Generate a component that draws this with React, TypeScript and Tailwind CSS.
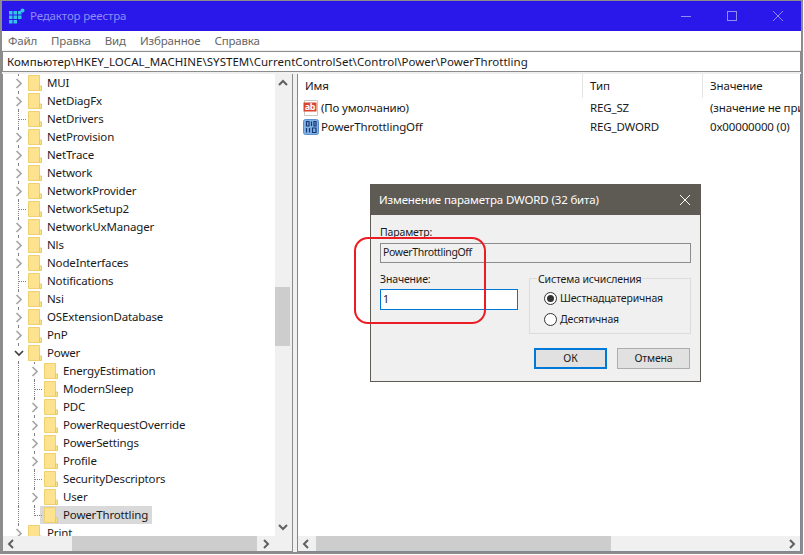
type Row = { name: string; depth: number; mark: "closed" | "open" | "leaf"; selected?: boolean; last?: boolean };

const rows: Row[] = [
  { name: "MUI", depth: 0, mark: "closed" },
  { name: "NetDiagFx", depth: 0, mark: "closed" },
  { name: "NetDrivers", depth: 0, mark: "leaf" },
  { name: "NetProvision", depth: 0, mark: "closed" },
  { name: "NetTrace", depth: 0, mark: "closed" },
  { name: "Network", depth: 0, mark: "closed" },
  { name: "NetworkProvider", depth: 0, mark: "closed" },
  { name: "NetworkSetup2", depth: 0, mark: "leaf" },
  { name: "NetworkUxManager", depth: 0, mark: "closed" },
  { name: "Nls", depth: 0, mark: "closed" },
  { name: "NodeInterfaces", depth: 0, mark: "closed" },
  { name: "Notifications", depth: 0, mark: "leaf" },
  { name: "Nsi", depth: 0, mark: "closed" },
  { name: "OSExtensionDatabase", depth: 0, mark: "closed" },
  { name: "PnP", depth: 0, mark: "closed" },
  { name: "Power", depth: 0, mark: "open" },
  { name: "EnergyEstimation", depth: 1, mark: "closed" },
  { name: "ModernSleep", depth: 1, mark: "leaf" },
  { name: "PDC", depth: 1, mark: "closed" },
  { name: "PowerRequestOverride", depth: 1, mark: "closed" },
  { name: "PowerSettings", depth: 1, mark: "closed" },
  { name: "Profile", depth: 1, mark: "closed" },
  { name: "SecurityDescriptors", depth: 1, mark: "leaf" },
  { name: "User", depth: 1, mark: "closed" },
  { name: "PowerThrottling", depth: 1, mark: "leaf", selected: true, last: true },
  { name: "Print", depth: 0, mark: "closed" },
];

function Folder() {
  return (
    <svg width="14" height="16" viewBox="0 0 14 16" className="shrink-0">
      <path d="M0.5 0.5H11.5V15.5H0.5Z" fill="#fde38f" stroke="#f0cf6e" />
      <path d="M11.5 11V15.5H13.5V11Z" fill="#fde38f" stroke="#e9c766" />
    </svg>
  );
}

function Mark({ row }: { row: Row }) {
  return (
    <div className="relative w-[25px] h-[18px] shrink-0">
      {row.depth === 1 && <div className="absolute -left-px top-0 bottom-0 border-l border-dotted border-[#808080]" />}
      <div className={`absolute left-[15px] top-0 border-l border-dotted border-[#808080] ${row.last ? "h-[10px]" : "bottom-0"}`} />
      {row.mark === "leaf" && <div className="absolute left-[16px] top-[9px] w-[7px] border-t border-dotted border-[#808080]" />}
      {row.mark === "closed" && (
        <div className="absolute left-[11px] top-[2px] w-[9px] h-[14px] bg-white flex items-center justify-center">
          <svg width="8" height="11" viewBox="0 0 8 11">
            <path d="M1.5 1L6 5.5L1.5 10" fill="none" stroke="#a6a6a6" strokeWidth="1.7" />
          </svg>
        </div>
      )}
      {row.mark === "open" && (
        <div className="absolute left-[9px] top-[2px] w-[13px] h-[14px] bg-white flex items-center justify-center">
          <svg width="10" height="7" viewBox="0 0 10 7">
            <path d="M1 1L5 5L9 1" fill="none" stroke="#404040" strokeWidth="1.7" />
          </svg>
        </div>
      )}
    </div>
  );
}

function TreeRow({ row }: { row: Row }) {
  return (
    <div className={`h-[18px] flex items-center ${row.depth === 1 ? "pl-[16px]" : ""}`}>
      <Mark row={row} />
      <div className={`h-[18px] flex items-center ${row.selected ? "bg-[#d9d9d9] -ml-[4px] pl-[4px] pr-[4px]" : ""}`}>
        <Folder />
        <span className="ml-[5px] whitespace-nowrap">{row.name}</span>
      </div>
    </div>
  );
}

function Chevron({ d }: { d: string }) {
  return (
    <svg width="10" height="10" viewBox="0 0 10 10" className="shrink-0">
      <path d={d} fill="none" stroke="#606060" strokeWidth="2" />
    </svg>
  );
}

export default function App() {
  return (
    <div className="font-['Noto_Sans',sans-serif] relative w-[804px] h-[555px] overflow-hidden bg-white text-[11.5px] tracking-[-0.15px] text-[#1a1a1a]">
      <div className="w-[803px] h-[554px] bg-[#f0f0f0] flex flex-col border-l-2 border-r-2 border-t border-b-2 border-[#8c8c8c]">
        <div className="h-[30px] bg-[#2a18ea] shrink-0 flex items-center text-[#8f8cf5]">
          <svg width="16" height="16" viewBox="0 0 16 16" className="ml-[7px]">
            <path d="M0 3h3.5v3.5H0zM4.5 3H8v3.5H4.5zM9 3h3.5v3.5H9zM0 7.5h3.5V11H0zM4.5 7.5H8V11H4.5zM9 7.5h3.5V11H9zM0 12h3.5v3.5H0zM4.5 12H8v3.5H4.5z" fill="#35c3e8" />
            <circle cx="13.5" cy="2.5" r="2" fill="#35c3e8" />
          </svg>
          <span className="ml-[5px]">Редактор реестра</span>
          <div className="ml-auto flex items-center">
            <div className="w-[46px] h-[30px] flex items-center justify-center">
              <div className="w-[10px] h-px bg-[#8f8cf5]" />
            </div>
            <div className="w-[46px] h-[30px] flex items-center justify-center">
              <div className="w-[10px] h-[10px] border border-[#8f8cf5]" />
            </div>
            <div className="w-[46px] h-[30px] flex items-center justify-center">
              <svg width="10" height="10" viewBox="0 0 10 10">
                <path d="M0 0L10 10M10 0L0 10" stroke="#8f8cf5" />
              </svg>
            </div>
          </div>
        </div>

        <div className="h-[19px] bg-white shrink-0 flex items-center gap-[14px] pl-[6px] text-[#666666]">
          <span>Файл</span>
          <span>Правка</span>
          <span>Вид</span>
          <span>Избранное</span>
          <span>Справка</span>
        </div>

        <div className="h-[21px] mt-px bg-white border border-[#8c8c8c] shrink-0 flex items-center pl-[4px] whitespace-nowrap tracking-[0.04px]">
          Компьютер\HKEY_LOCAL_MACHINE\SYSTEM\CurrentControlSet\Control\Power\PowerThrottling
        </div>

        <div className="flex-1 min-h-0 flex mt-[2px] gap-[4px]">
          <div className="w-[291px] border-l border-r border-b border-[#8c8c8c] bg-white flex flex-col overflow-hidden">
            <div className="flex-1 min-h-0 flex">
              <div className="flex-1 overflow-hidden">
                {rows.map((row) => (
                  <TreeRow key={row.name} row={row} />
                ))}
              </div>
              <div className="w-[17px] shrink-0 bg-[#f0f0f0] flex flex-col items-center justify-between pr-[2px] py-[4px] relative">
                <Chevron d="M1 7L5 3L9 7" />
                <div className="absolute left-0 w-[15px] top-[213px] h-[59px] bg-[#cdcdcd]" />
                <Chevron d="M1 3L5 7L9 3" />
              </div>
            </div>
            <div className="h-[15px] bg-[#f0f0f0] shrink-0 flex items-center pl-[3px] pr-[21px]">
              <Chevron d="M7 1L3 5L7 9" />
              <div className="ml-[56px] w-[185px] h-[15px] bg-[#cdcdcd]" />
              <div className="ml-auto">
                <Chevron d="M3 1L7 5L3 9" />
              </div>
            </div>
          </div>

          <div className="flex-1 border-l border-r border-b border-[#828790] bg-white flex flex-col overflow-hidden">
            <div className="h-[24px] shrink-0 flex">
              <div className="w-[285px] pl-[7px] flex items-center border-r border-[#e5e5e5]">Имя</div>
              <div className="w-[120px] pl-[7px] flex items-center border-r border-[#e5e5e5]">Тип</div>
              <div className="pl-[7px] flex items-center">Значение</div>
            </div>
            <div className="flex-1 min-h-0">
              <div className="h-[19px] flex items-center whitespace-nowrap">
                <div className="w-[285px] flex items-center pl-[5px] shrink-0">
                  <svg width="16" height="16" viewBox="0 0 16 16">
                    <path d="M1.5 0.5H14.5V15.5H1.5Z" fill="#fff" stroke="#c8c8c8" />
                    <rect x="0.5" y="2.5" width="13" height="9" fill="#d9442c" />
                    <text x="7" y="10" textAnchor="middle" fontSize="9" fontWeight="700" fill="#fff" letterSpacing="-0.3">ab</text>
                  </svg>
                  <span className="ml-[2px]">(По умолчанию)</span>
                </div>
                <div className="w-[120px] pl-[7px] shrink-0">REG_SZ</div>
                <div className="pl-[7px]">(значение не присвоено)</div>
              </div>
              <div className="h-[19px] flex items-center whitespace-nowrap">
                <div className="w-[285px] flex items-center pl-[5px] shrink-0">
                  <svg width="16" height="16" viewBox="0 0 16 16">
                    <rect x="0.5" y="0.5" width="15" height="15" rx="2" fill="#7fb0e6" stroke="#5b8fd0" />
                    <path d="M3.5 2.5h2.5v4.5H3.5zM8.5 2.5v4.5M11 2.5h2v4.5h-2zM3.5 9v4.5M6.5 9v4.5M9.5 9h3.5v4.5H9.5z" fill="none" stroke="#17366f" strokeWidth="1.2" />
                  </svg>
                  <span className="ml-[2px]">PowerThrottlingOff</span>
                </div>
                <div className="w-[120px] pl-[7px] shrink-0">REG_DWORD</div>
                <div className="pl-[7px]">0x00000000 (0)</div>
              </div>
            </div>
            <div className="h-[15px] bg-[#f0f0f0] shrink-0 flex items-center px-[3px]">
              <Chevron d="M7 1L3 5L7 9" />
              <div className="ml-[5px] w-[295px] h-[15px] bg-[#cdcdcd]" />
              <div className="ml-auto">
                <Chevron d="M3 1L7 5L3 9" />
              </div>
            </div>
          </div>
        </div>
      </div>

      {/* dialog sits over the window */}
      <div className="absolute left-[370px] top-[184px] w-[331px] h-[198px] border border-[#5e5a54] bg-[#f0f0f0] flex flex-col">
        <div className="h-[30px] bg-[#5e5a54] text-white flex items-center pl-[8px] shrink-0">
          <span>Изменение параметра DWORD (32 бита)</span>
          <svg width="12" height="12" viewBox="0 0 12 12" className="ml-auto mr-[9px]">
            <path d="M1 1L11 11M11 1L1 11" stroke="#fff" strokeWidth="1" />
          </svg>
        </div>
        <div className="px-[9px] pt-[9px] flex flex-col text-[10.5px] tracking-[-0.15px]">
          <div className="h-[16px] leading-[16px]">Параметр:</div>
          <div className="mt-[3px] h-[20px] border border-[#8c8c8c] bg-[#f0f0f0] flex items-center pl-[2px] tracking-[-0.35px]">PowerThrottlingOff</div>
          <div className="flex mt-[6px]">
            <div className="w-[138px] shrink-0">
              <div className="h-[16px] leading-[16px] mt-[2px]">Значение:</div>
              <div className="mt-[2px] h-[21px] border border-[#0078d7] bg-white flex items-center pl-[2px]">1</div>
            </div>
            <div className="relative ml-[11px] mt-[9px] w-[162px] h-[56px] border border-[#dcdcdc]">
              <div className="absolute left-[7px] -top-[8px] bg-[#f0f0f0] px-px leading-[16px] whitespace-nowrap">Система исчисления</div>
              <div className="absolute left-[14px] top-[12px] flex items-center gap-[3px]">
                <div className="w-[13px] h-[13px] rounded-full border border-[#333333] bg-white flex items-center justify-center">
                  <div className="w-[7px] h-[7px] rounded-full bg-[#333333]" />
                </div>
                <span className="whitespace-nowrap">Шестнадцатеричная</span>
              </div>
              <div className="absolute left-[14px] top-[33px] flex items-center gap-[3px]">
                <div className="w-[13px] h-[13px] rounded-full border border-[#333333] bg-white" />
                <span>Десятичная</span>
              </div>
            </div>
          </div>
          <div className="flex justify-end gap-[10px] mt-[14px] pr-px">
            <div className="w-[73px] h-[21px] border-2 border-[#0078d7] bg-[#e1e1e1] flex items-center justify-center">ОК</div>
            <div className="w-[73px] h-[21px] border border-[#adadad] bg-[#e1e1e1] flex items-center justify-center">Отмена</div>
          </div>
        </div>
      </div>

      {/* red marker drawn on top of the screenshot */}
      <div className="absolute left-[354px] top-[237px] w-[132px] h-[87px] border-2 border-[#ec1c24] rounded-[14px]" />
    </div>
  );
}
